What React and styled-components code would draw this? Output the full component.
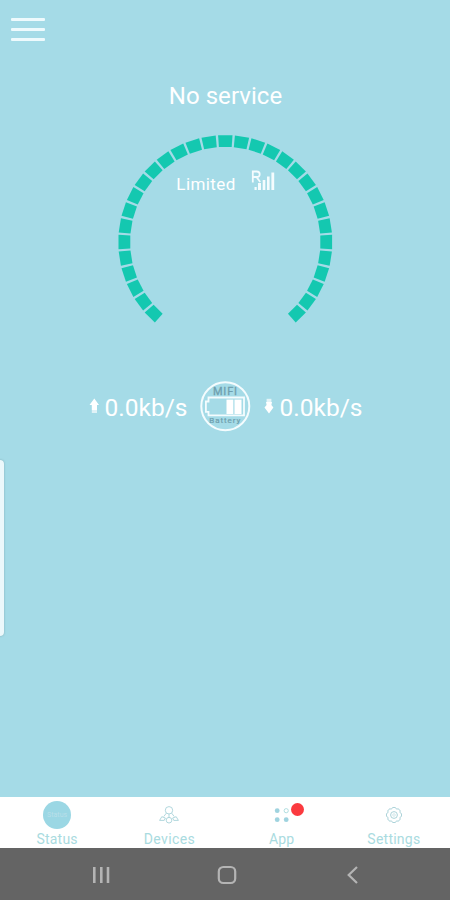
import React from "react";
import styled, { createGlobalStyle } from "styled-components";

const GlobalStyle = createGlobalStyle`
  * {
    box-sizing: border-box;
  }

  body {
    margin: 0;
    font-family: Roboto, "Liberation Sans", sans-serif;
  }

  svg {
    display: block;
  }
`;

const Screen = styled.div`
  position: relative;
  width: 450px;
  height: 900px;
  display: flex;
  flex-direction: column;
  background-color: #a5dbe7;
  overflow: hidden;
`;

const MenuButton = styled.button`
  width: 35px;
  height: 23px;
  margin: 18px 0 0 11px;
  padding: 0;
  display: flex;
  flex-direction: column;
  justify-content: space-between;
  background: none;
  border: none;
`;

const MenuLine = styled.span`
  width: 34px;
  height: 3px;
  border-radius: 1px;
  background-color: #eefafd;
`;

const Main = styled.main`
  flex: 1;
  display: flex;
  flex-direction: column;
  align-items: center;
  padding-left: 1px;
`;

const Title = styled.h1`
  margin: 41px 0 0;
  font-size: 24px;
  font-weight: 400;
  line-height: 28px;
  letter-spacing: 0.05px;
  color: #fff;
`;

const Dial = styled.div`
  display: grid;
  width: 216px;
  height: 216px;
  margin-top: 24px;

  & > * {
    grid-area: 1 / 1;
  }
`;

const Network = styled.div`
  display: flex;
  align-items: flex-start;
  justify-content: center;
  gap: 15px;
  padding-top: 36px;
`;

const NetworkType = styled.span`
  padding-top: 4px;
  font-size: 17px;
  line-height: 20px;
  letter-spacing: 0.4px;
  color: #fff;
`;

const Traffic = styled.div`
  display: flex;
  align-items: center;
  margin-top: 30px;
  gap: 12px;
`;

const Speed = styled.div`
  width: 99px;
  display: flex;
  align-items: center;
  gap: 5px;
  padding-top: 3px;
  font-size: 24.5px;
  line-height: 28px;
  white-space: nowrap;
  color: #fff;
`;

const EdgeHandle = styled.div`
  position: absolute;
  left: -4px;
  top: 460px;
  width: 8px;
  height: 176px;
  border-radius: 4px;
  background-color: #ecf8fb;
  box-shadow: 0 0 2px rgba(90, 120, 125, 0.5);
`;

const TabBar = styled.nav`
  height: 51px;
  display: grid;
  grid-template-columns: repeat(4, 1fr);
  padding-left: 1px;
  background-color: #fff;
`;

const Tab = styled.div`
  display: flex;
  flex-direction: column;
  align-items: center;
`;

const TabIcon = styled.div`
  position: relative;
  height: 35px;
  display: flex;
  align-items: center;
  justify-content: center;
`;

const TabLabel = styled.span`
  font-size: 14px;
  line-height: 14px;
  letter-spacing: ${({ $spacing }) => $spacing}px;
  color: #a9dbe0;
`;

const Badge = styled.span`
  position: absolute;
  top: 6px;
  left: 17px;
  width: 13px;
  height: 13px;
  border-radius: 50%;
  background-color: #fb3a3f;
`;

const StatusDot = styled.div`
  width: 28px;
  height: 28px;
  border-radius: 50%;
  display: flex;
  align-items: center;
  justify-content: center;
  background-color: #9bd7e4;
  font-size: 7px;
  color: #b9dfe9;
`;

const SystemBar = styled.footer`
  height: 52px;
  padding: 2px 36px 0 39px;
  display: grid;
  grid-template-columns: repeat(3, 1fr);
  align-items: center;
  justify-items: center;
  background-color: #646464;
`;

// 31 blocks, 9 degrees apart
const ticks = Array.from({ length: 31 }, (_, i) => -135 + i * 9);

const Gauge = () => (
  <svg width="216" height="216" viewBox="-107.3 -108 216 216">
    {ticks.map((angle) => (
      <path
        key={angle}
        d="M-7.2 -106.8H7.2L6.4 -95H-6.4Z"
        fill="#14c8b0"
        transform={`rotate(${angle})`}
      />
    ))}
  </svg>
);

const SignalIcon = () => (
  <svg width="24" height="22" viewBox="0 0 24 22" fill="#f4fcfe">
    <path
      d="M1.8 12.5V1.5H5.7Q8.7 1.5 8.7 4.3T5.7 7H2M5.5 7L9.2 12"
      fill="none"
      stroke="#f4fcfe"
      strokeWidth="1.8"
    />
    <rect x="3.5" y="17" width="2.2" height="3" />
    <rect x="7" y="13" width="3" height="7" />
    <rect x="11.7" y="10" width="2.6" height="10" />
    <rect x="16" y="6.5" width="2.6" height="13.5" />
    <rect x="20.4" y="2.5" width="2.8" height="17.5" />
  </svg>
);

const UpArrow = () => (
  <svg width="11" height="19" viewBox="0 0 11 19" fill="#fff">
    <path d="M5.3 0.5L10 7H8V12H2.8V7H0.5Z" />
    <rect x="2.8" y="12" width="5.2" height="3" opacity="0.65" />
  </svg>
);

const DownArrow = () => (
  <svg width="11" height="19" viewBox="0 0 11 19" fill="#fff">
    <path d="M5 15.5L9.4 9.5L7.4 7L8 4H2L2.6 7L0.5 9.5Z" />
    <rect x="2.6" y="0.8" width="4.8" height="3.2" opacity="0.7" />
  </svg>
);

const BatteryIcon = () => (
  <svg width="52" height="52" viewBox="0.7 -0.3 52 52">
    <circle cx="26" cy="26" r="24" fill="none" stroke="#f4fcfe" strokeWidth="2" />
    <text
      x="13.7"
      y="14.8"
      fontSize="11"
      textLength="24"
      fill="#6f9fae"
      stroke="#6f9fae"
      strokeWidth="0.3"
    >
      MIFI
    </text>
    <path
      d="M9.2 17.2H44.7V35H9.2V31.5H6.6V21.2H9.2Z"
      fill="none"
      stroke="#f4fcfe"
      strokeWidth="1.8"
    />
    <rect x="27.2" y="19.3" width="6.8" height="14.4" fill="#fff" />
    <rect x="35.2" y="19.3" width="7" height="14.4" fill="#fff" />
    <text
      x="10"
      y="43.2"
      fontSize="8"
      textLength="31"
      fill="#6f9fae"
      stroke="#6f9fae"
      strokeWidth="0.2"
    >
      Battery
    </text>
  </svg>
);

const DevicesIcon = () => (
  <svg
    width="20"
    height="18"
    viewBox="0 0 20 18"
    fill="none"
    stroke="#a8d3d9"
    strokeWidth="0.9"
  >
    <circle cx="10" cy="4.3" r="3.7" />
    <path d="M7.3 7.2L4.8 10.5M10 8V12M12.7 7.2L15.2 10.5" />
    <path d="M0.6 14.4L2.8 10.7L6.4 12L5.2 14.4Z" />
    <path d="M19.4 14.4L17.2 10.7L13.6 12L14.8 14.4Z" />
    <circle cx="10" cy="14.2" r="2.8" />
  </svg>
);

const AppIcon = () => (
  <svg width="16" height="16" viewBox="0 0 16 16" fill="#9fd3df">
    <circle cx="3.2" cy="3.7" r="2.4" />
    <circle cx="12.2" cy="3.7" r="2.1" fill="none" stroke="#a8dadd" strokeWidth="0.9" />
    <circle cx="3.2" cy="12.7" r="2.4" />
    <circle cx="12.2" cy="12.7" r="2.4" />
  </svg>
);

const teeth = Array.from({ length: 8 }, (_, i) => i * 45);

const GearIcon = () => (
  <svg
    width="18"
    height="18"
    viewBox="-9 -9 18 18"
    fill="none"
    stroke="#a3ced5"
    strokeWidth="0.9"
  >
    {teeth.map((angle) => (
      <path
        key={angle}
        d="M-2.5 -6.1Q-1.9 -6.1 -1.6 -7.3Q0 -7.9 1.6 -7.3Q1.9 -6.1 2.5 -6.1"
        transform={`rotate(${angle})`}
      />
    ))}
    <circle r="3.4" />
    <circle r="1.3" opacity="0.5" />
  </svg>
);

const tabs = [
  { label: "Status", icon: <StatusDot>Status</StatusDot>, spacing: 0.2 },
  { label: "Devices", icon: <DevicesIcon />, spacing: 0.4 },
  { label: "App", icon: <AppIcon />, badge: true, spacing: 0.2 },
  { label: "Settings", icon: <GearIcon />, spacing: 0.25 },
];

const App = () => {
  return (
    <>
      <GlobalStyle />
      <Screen>
        <MenuButton aria-label="Menu">
          <MenuLine />
          <MenuLine />
          <MenuLine />
        </MenuButton>
        <Main>
          <Title>No service</Title>
          <Dial>
            <Gauge />
            <Network>
              <NetworkType>Limited</NetworkType>
              <SignalIcon />
            </Network>
          </Dial>
          <Traffic>
            <Speed>
              <UpArrow />
              0.0kb/s
            </Speed>
            <BatteryIcon />
            <Speed>
              <DownArrow />
              0.0kb/s
            </Speed>
          </Traffic>
        </Main>
        <TabBar>
          {tabs.map((tab) => (
            <Tab key={tab.label}>
              <TabIcon>
                {tab.icon}
                {tab.badge && <Badge />}
              </TabIcon>
              <TabLabel $spacing={tab.spacing}>{tab.label}</TabLabel>
            </Tab>
          ))}
        </TabBar>
        <SystemBar>
          <svg width="18" height="18" viewBox="0 0 18 18" fill="#b4b4b4">
            <rect x="0" y="1" width="2.6" height="16" />
            <rect x="7" y="1" width="2.6" height="16" />
            <rect x="13.7" y="1" width="2.6" height="16" />
          </svg>
          <svg width="20" height="20" viewBox="0 0 20 20">
            <rect
              x="1.8"
              y="2"
              width="16.4"
              height="16"
              rx="4.5"
              fill="none"
              stroke="#b4b4b4"
              strokeWidth="2.2"
            />
          </svg>
          <svg width="12" height="18" viewBox="0 0 12 18">
            <path d="M11 1L2.7 9L11 17" fill="none" stroke="#b4b4b4" strokeWidth="2.2" />
          </svg>
        </SystemBar>
        <EdgeHandle />
      </Screen>
    </>
  );
};

export default App;
